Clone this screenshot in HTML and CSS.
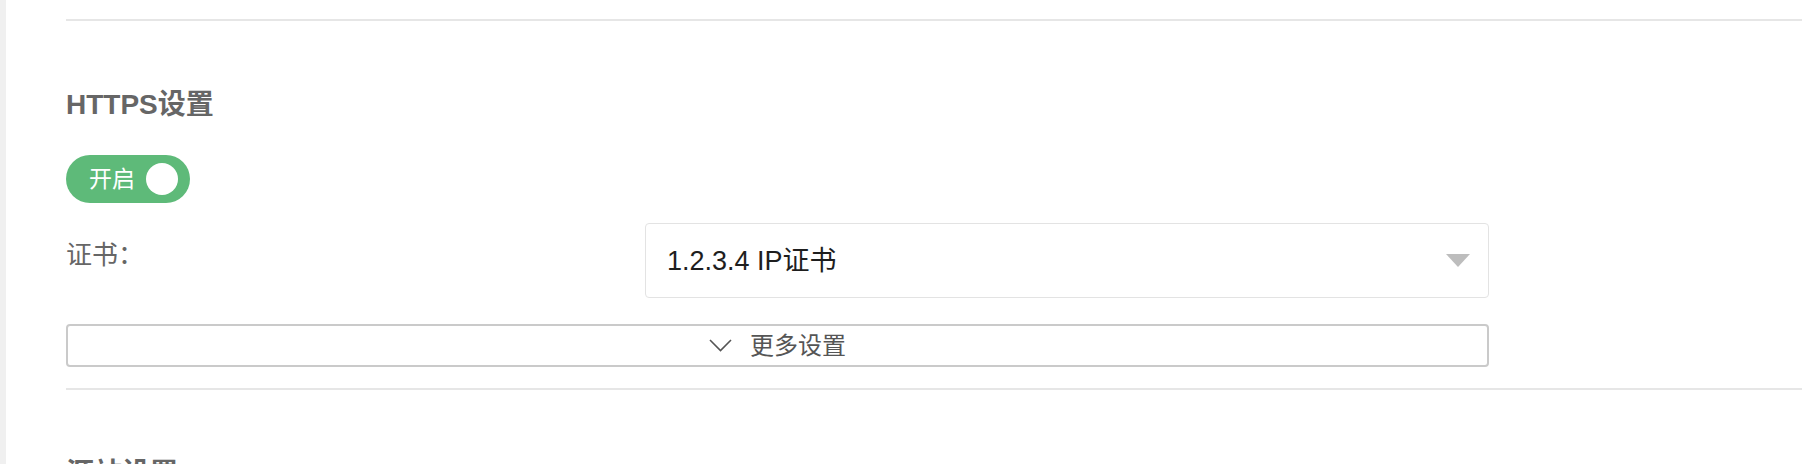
FILE: index.html
```html
<!DOCTYPE html>
<html lang="zh-CN">
<head>
<meta charset="utf-8">
<title>HTTPS设置</title>
<link rel="stylesheet" href="styles.css">
</head>
<body>
<div class="page">
  <div class="strip"></div>
  <main class="main">
    <div class="divider"></div>
    <section class="section">
      <h2 class="title">HTTPS设置</h2>
      <div class="toggle">
        <span class="toggle-text">开启</span>
        <span class="knob"></span>
      </div>
      <div class="row">
        <div class="label">证书：</div>
        <div class="select">
          <span class="select-value">1.2.3.4 IP证书</span>
          <span class="caret"></span>
        </div>
      </div>
      <div class="more">
        <svg class="chevron" width="23" height="13" viewBox="0 0 23 13"><polyline points="1,1 11.5,11.5 22,1" fill="none" stroke="#555" stroke-width="1.6"/></svg>
        <span class="more-text">更多设置</span>
      </div>
    </section>
    <div class="divider divider-bottom"></div>
    <section class="section">
      <h2 class="title">源站设置</h2>
    </section>
  </main>
</div>
</body>
</html>
```

FILE: styles.css
```css
html, body {
  margin: 0;
  padding: 0;
  background: #ffffff;
  height: 464px;
  overflow: hidden;
}

body {
  font-family: "Liberation Sans", "Noto Sans CJK SC", sans-serif;
}

.page {
  display: flex;
  height: 464px;
}

.strip {
  width: 6px;
  flex: none;
  background: #f0f0f0;
}

.main {
  flex: 1;
  padding-left: 60px;
}

.divider {
  height: 2px;
  background: #e6e6e6;
  margin-top: 19px;
}

.divider-bottom {
  margin-top: 21px;
}

.section {
  padding-top: 70px;
}

.title {
  margin: 0;
  font-size: 28px;
  line-height: 28px;
  font-weight: bold;
  color: #666666;
}

.toggle {
  margin-top: 36px;
  width: 124px;
  height: 48px;
  border-radius: 24px;
  background: #5eba79;
  display: flex;
  align-items: center;
  box-sizing: border-box;
  padding-left: 23px;
  padding-right: 12px;
  justify-content: space-between;
}

.toggle-text {
  color: #ffffff;
  font-size: 23px;
  line-height: 24px;
}

.knob {
  width: 32px;
  height: 32px;
  border-radius: 50%;
  background: #ffffff;
}

.row {
  margin-top: 20px;
  display: grid;
  grid-template-columns: 579px 844px;
}

.label {
  padding-top: 19px;
  font-size: 26px;
  line-height: 26px;
  color: #666666;
}

.select {
  height: 75px;
  box-sizing: border-box;
  border: 1.5px solid #e3e3e3;
  border-radius: 4px;
  display: flex;
  align-items: center;
  justify-content: space-between;
  padding: 0 18px 0 21px;
}

.select-value {
  font-size: 27px;
  line-height: 30px;
  color: #1e1e1e;
}

.caret {
  width: 0;
  height: 0;
  border-left: 12px solid transparent;
  border-right: 12px solid transparent;
  border-top: 13px solid #bdbdbd;
}

.more {
  margin-top: 26px;
  width: 1423px;
  height: 43px;
  box-sizing: border-box;
  border: 2px solid #cacaca;
  border-radius: 4px;
  display: flex;
  align-items: center;
  justify-content: center;
  gap: 18px;
}

.chevron {
  display: block;
}

.more-text {
  font-size: 24px;
  line-height: 26px;
  color: #555555;
}
```
